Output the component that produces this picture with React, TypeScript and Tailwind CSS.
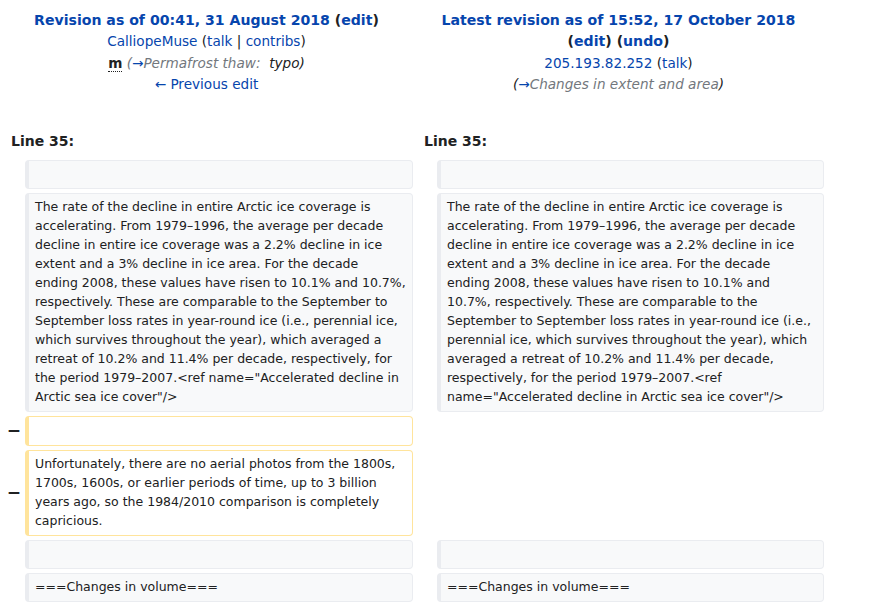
import React from 'react';

const leftPara = [
  'The rate of the decline in entire Arctic ice coverage is',
  'accelerating. From 1979–1996, the average per decade',
  'decline in entire ice coverage was a 2.2% decline in ice',
  'extent and a 3% decline in ice area. For the decade',
  'ending 2008, these values have risen to 10.1% and 10.7%,',
  'respectively. These are comparable to the September to',
  'September loss rates in year-round ice (i.e., perennial ice,',
  'which survives throughout the year), which averaged a',
  'retreat of 10.2% and 11.4% per decade, respectively, for',
  'the period 1979–2007.<ref name="Accelerated decline in',
  'Arctic sea ice cover"/>',
];

const rightPara = [
  'The rate of the decline in entire Arctic ice coverage is',
  'accelerating. From 1979–1996, the average per decade',
  'decline in entire ice coverage was a 2.2% decline in ice',
  'extent and a 3% decline in ice area. For the decade',
  'ending 2008, these values have risen to 10.1% and',
  '10.7%, respectively. These are comparable to the',
  'September to September loss rates in year-round ice (i.e.,',
  'perennial ice, which survives throughout the year), which',
  'averaged a retreat of 10.2% and 11.4% per decade,',
  'respectively, for the period 1979–2007.<ref',
  'name="Accelerated decline in Arctic sea ice cover"/>',
];

const removedPara = [
  'Unfortunately, there are no aerial photos from the 1800s,',
  '1700s, 1600s, or earlier periods of time, up to 3 billion',
  'years ago, so the 1984/2010 comparison is completely',
  'capricious.',
];

function Lines({ lines }: { lines: string[] }) {
  return (
    <>
      {lines.map((l, i) => (
        <div key={i} className="whitespace-nowrap">{l}</div>
      ))}
    </>
  );
}

function Context({ lines = [] as string[] }) {
  return (
    <div className="min-h-[29px] rounded-[4px] border border-l-4 border-[#eaecf0] bg-[#f8f9fa] px-[6px] pt-[3px] pb-[5px]">
      {lines.length ? <Lines lines={lines} /> : <div>&nbsp;</div>}
    </div>
  );
}

function Deleted({ lines = [] as string[] }) {
  return (
    <div className="min-h-[30px] rounded-[4px] border border-l-4 border-[#ffe49c] bg-white px-[6px] pt-[3px] pb-[5px]">
      {lines.length ? <Lines lines={lines} /> : <div>&nbsp;</div>}
    </div>
  );
}

function Marker({ sign }: { sign?: string }) {
  return (
    <div className="flex items-center justify-end pr-[4px] font-bold text-[17px] leading-none">
      {sign}
    </div>
  );
}

const link = 'text-[#0645ad]';

export default function App() {
  return (
    <div className="w-[874px] h-[606px] overflow-hidden bg-white text-[#202122] font-['DejaVu_Sans',sans-serif]">
      <div className="grid grid-cols-[413px_411px] pt-[10px] text-[13.6px] leading-[21.4px] text-center">
        <div>
          <div className="font-bold text-[14.1px]">
            <span className={link}>Revision as of 00:41, 31 August 2018</span> (<span className={link}>edit</span>)
          </div>
          <div>
            <span className={link}>CalliopeMuse</span> (<span className={link}>talk</span> | <span className={link}>contribs</span>)
          </div>
          <div>
            <abbr className="font-bold no-underline border-b border-dotted border-[#202122]">m</abbr>{' '}
            <span className="italic">
              <span className="text-[#72777d]">(<span className={link}>→</span>Permafrost thaw:&nbsp;</span> typo)
            </span>
          </div>
          <div className={link}>← Previous edit</div>
        </div>
        <div>
          <div className="font-bold text-[14.1px]">
            <span className={link}>Latest revision as of 15:52, 17 October 2018</span>
            <br />
            (<span className={link}>edit</span>) (<span className={link}>undo</span>)
          </div>
          <div>
            <span className={link}>205.193.82.252</span> (<span className={link}>talk</span>)
          </div>
          <div className="italic">
            (<span className="text-[#72777d]"><span className={link}>→</span>Changes in extent and area</span>)
          </div>
        </div>
      </div>

      <div className="grid grid-cols-[413px_411px] mt-[35px] text-[14px] leading-[21px] font-bold">
        <div className="pl-[11px]">Line 35:</div>
        <div className="pl-[11px]">Line 35:</div>
      </div>

      <div className="grid grid-cols-[25px_388px_24px_387px] gap-y-[4px] mt-[8px] text-[12.5px] leading-[19px]">
        <Marker />
        <Context />
        <Marker />
        <Context />

        <Marker />
        <Context lines={leftPara} />
        <Marker />
        <div className="self-start">
          <Context lines={rightPara} />
        </div>

        <Marker sign="−" />
        <Deleted />
        <div />
        <div />

        <Marker sign="−" />
        <Deleted lines={removedPara} />
        <div />
        <div />

        <Marker />
        <Context />
        <Marker />
        <Context />

        <Marker />
        <Context lines={['===Changes in volume===']} />
        <Marker />
        <Context lines={['===Changes in volume===']} />
      </div>
    </div>
  );
}
